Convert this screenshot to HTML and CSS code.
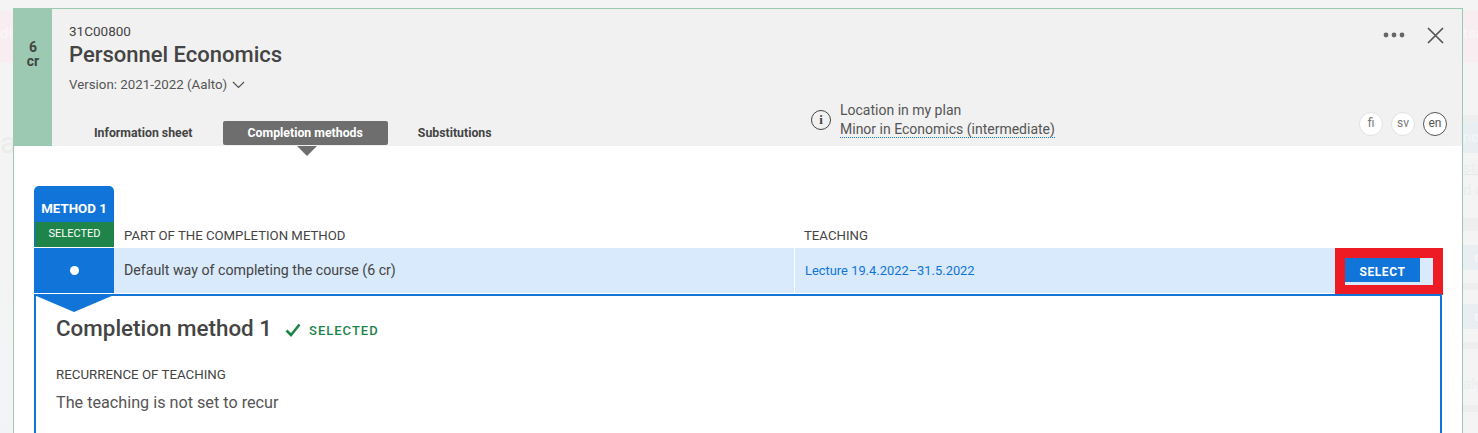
FILE: index.html
```html
<!DOCTYPE html>
<html lang="en">
<head>
  <meta charset="UTF-8" />
  <title>Personnel Economics</title>
  <link rel="stylesheet" href="styles.css">
</head>
<body>
  <div class="backdrop">
    <div class="bg-strip left">
      <div class="bg-pink">di</div>
      <div class="bg-letter">a</div>
    </div>
    <div class="modal">
      <div class="modal-head">
        <div class="credits"><span>6</span><span>cr</span></div>
        <div class="head-main">
          <div class="head-top">
            <div class="titles">
              <div class="code">31C00800</div>
              <h1>Personnel Economics</h1>
              <div class="version">Version: 2021-2022 (Aalto)
                <svg width="13" height="8" viewBox="0 0 13 8"><path d="M1 1l5.5 5.5L12 1" fill="none" stroke="#555" stroke-width="1.2"/></svg>
              </div>
            </div>
            <div class="head-actions">
              <svg width="22" height="6" viewBox="0 0 22 6"><circle cx="3" cy="3" r="2.4" fill="#666"/><circle cx="11" cy="3" r="2.4" fill="#666"/><circle cx="19" cy="3" r="2.4" fill="#666"/></svg>
              <svg width="17" height="17" viewBox="0 0 17 17"><path d="M1 1l15 15M16 1L1 16" stroke="#555" stroke-width="1.7" fill="none"/></svg>
            </div>
          </div>
          <div class="head-bottom">
            <div class="tabs">
              <a class="tab">Information sheet</a>
              <a class="tab active">Completion methods</a>
              <a class="tab">Substitutions</a>
            </div>
            <div class="location">
              <span class="info-icon">i</span>
              <div class="location-text">
                <div>Location in my plan</div>
                <a>Minor in Economics (intermediate)</a>
              </div>
            </div>
            <div class="langs">
              <span class="lang">fi</span>
              <span class="lang">sv</span>
              <span class="lang current">en</span>
            </div>
          </div>
        </div>
      </div>
      <div class="modal-body">
        <div class="method-table">
          <div class="method-col">
            <div class="method-tab">METHOD 1</div>
            <div class="method-selected">SELECTED</div>
            <div class="method-radio"><span class="dot"></span></div>
          </div>
          <div class="method-rows">
            <div class="col-heads">
              <div class="col-part">PART OF THE COMPLETION METHOD</div>
              <div class="col-teach">TEACHING</div>
            </div>
            <div class="row">
              <div class="col-part">Default way of completing the course (6 cr)</div>
              <div class="col-teach"><a>Lecture 19.4.2022–31.5.2022</a></div>
              <div class="col-btn">
                <div class="select-mark"><button class="select-btn">SELECT</button></div>
              </div>
            </div>
          </div>
        </div>
        <div class="detail">
          <svg class="pointer" width="80" height="17" viewBox="0 0 80 17"><path d="M0 0h80L40 17z" fill="#1174d9"/></svg>
          <div class="detail-title">
            <h2>Completion method 1</h2>
            <svg class="check" width="16" height="14" viewBox="0 0 16 14"><path d="M1.5 7.5l4.5 4.5L14.5 1.5" fill="none" stroke="#1e8449" stroke-width="2.6"/></svg>
            <span class="selected-label">SELECTED</span>
          </div>
          <h3>RECURRENCE OF TEACHING</h3>
          <p>The teaching is not set to recur</p>
        </div>
      </div>
    </div>
    <div class="bg-strip right">
      <div class="bg-pink">tsa</div>
      <div class="bg-band first"></div>
      <div class="bg-blue">no</div>
      <div class="bg-text lined">str</div>
      <div class="bg-text">d c</div>
      <div class="bg-band gap-a"></div>
      <div class="bg-blue short">d</div>
      <div class="bg-band gap-b"></div>
      <div class="bg-blue short">d</div>
      <div class="bg-band gap-b"></div>
      <div class="bg-text tall">ald</div>
      <div class="bg-band gap-c"></div>
    </div>
  </div>
</body>
</html>
```

FILE: styles.css
```css
html, body {
  margin: 0;
  height: 100%;
  overflow: hidden;
}
body {
  font-family: Roboto, 'Noto Sans', sans-serif;
  color: #444;
  background: #f4f4f4;
}
.backdrop {
  display: flex;
  height: 433px;
  overflow: hidden;
}
.bg-strip {
  width: 13px;
  flex: none;
  padding-top: 11px;
  overflow: hidden;
  white-space: nowrap;
}
.bg-strip.left {
  background: linear-gradient(#f4f4f4 60%, #f1f3f5);
}
.bg-strip.right {
  width: 15px;
}
.bg-pink {
  height: 52px;
  background: #f8eef1;
  color: #fbf7f8;
  font-size: 15px;
  line-height: 44px;
}
.bg-letter {
  color: #ececec;
  font-size: 30px;
  line-height: 40px;
  margin-top: 60px;
}
.bg-band {
  height: 7px;
  background: #eeeeee;
}
.bg-band.first {
  margin-top: 52px;
}
.bg-band.gap-a {
  height: 13px;
  margin-top: 13px;
  margin-bottom: 14px;
}
.bg-band.gap-b {
  margin: 13px 0 14px;
}
.bg-band.gap-c {
  margin-top: 0;
}
.bg-blue {
  height: 31px;
  background: #e9eef2;
  color: #f4f6f8;
  font-size: 15px;
  line-height: 31px;
}
.bg-blue.short {
  height: 25px;
  line-height: 25px;
  text-indent: 11px;
  font-weight: 700;
}
.bg-text {
  height: 30px;
  line-height: 30px;
  font-size: 15px;
  color: #ecedef;
}
.bg-text.lined {
  height: 21px;
  border-bottom: 1px solid #e8e8e8;
}
.bg-text.tall {
  height: 42px;
  line-height: 42px;
}
.modal {
  flex: 1;
  min-width: 0;
  margin-top: 8px;
  background: #fff;
  border: 1px solid #9cc9b1;
  border-bottom: none;
}
.modal-head {
  display: flex;
  height: 137px;
  background: #f1f1f1;
}
.credits {
  width: 38px;
  flex: none;
  background: #9cc9b1;
  display: flex;
  flex-direction: column;
  align-items: center;
  padding-top: 31px;
  box-sizing: border-box;
  font-size: 14px;
  font-weight: 700;
  line-height: 14px;
}
.head-main {
  flex: 1;
  display: flex;
  flex-direction: column;
  justify-content: space-between;
  padding-left: 17px;
}
.head-top {
  display: flex;
  justify-content: space-between;
}
.code {
  font-size: 13.5px;
  margin-top: 14px;
  line-height: 17px;
}
h1 {
  margin: 0;
  font-size: 22px;
  line-height: 30px;
  font-weight: 500;
}
.version {
  margin-top: 6px;
  font-size: 13.3px;
  line-height: 18px;
  color: #555;
}
.version svg {
  margin-left: 2px;
}
.head-actions {
  display: flex;
  align-items: center;
  gap: 22px;
  height: 20px;
  margin: 16px 18px 0 0;
}
.head-bottom {
  display: flex;
  align-items: flex-end;
}
.tabs {
  display: flex;
  align-items: center;
  gap: 5px;
  margin-bottom: 1px;
  width: 742px;
}
.tab {
  font-size: 12.3px;
  font-weight: 700;
  line-height: 24px;
  color: #444;
  padding: 0 25px;
  position: relative;
}
.tab.active {
  background: #6e6e6e;
  color: #fff;
  border-radius: 2px;
}
.tab.active::after {
  content: "";
  position: absolute;
  left: 50%;
  top: 100%;
  margin: 1px 0 0 -8px;
  border: 10px solid transparent;
  border-top-color: #6e6e6e;
  border-bottom: none;
}
.location {
  display: flex;
  align-items: center;
  gap: 9px;
  flex: 1;
  font-size: 14px;
  line-height: 19px;
  color: #555;
  margin-bottom: 7px;
}
.info-icon {
  width: 20px;
  height: 20px;
  box-sizing: border-box;
  border: 1.5px solid #444;
  border-radius: 50%;
  text-align: center;
  font: 700 13px/17px 'Liberation Serif', serif;
  color: #444;
}
.location-text a {
  border-bottom: 1px dotted #1174d9;
}
.langs {
  display: flex;
  gap: 8px;
  margin: 0 15px 10px 0;
}
.lang {
  width: 24px;
  height: 24px;
  box-sizing: border-box;
  background: #fff;
  border: 1px solid #e2e2e2;
  border-radius: 50%;
  font-size: 12px;
  line-height: 21px;
  text-align: center;
  color: #777;
}
.lang.current {
  border-color: #555;
  color: #555;
}
.modal-body {
  padding: 40px 20px 0;
}
.method-table {
  display: flex;
}
.method-col {
  width: 80px;
  flex: none;
}
.method-tab {
  height: 36px;
  background: #1174d9;
  border-radius: 5px 5px 0 0;
  color: #fff;
  font-size: 13.3px;
  font-weight: 700;
  line-height: 46px;
  text-align: center;
}
.method-selected {
  height: 25px;
  background: #1e8449;
  border-left: 1px solid #1174d9;
  color: #fff;
  font-size: 11px;
  line-height: 24px;
  text-align: center;
}
.method-radio {
  height: 45px;
  margin-top: 1px;
  background: #1174d9;
  display: flex;
  align-items: center;
  justify-content: center;
}
.dot {
  width: 9px;
  height: 9px;
  border-radius: 50%;
  background: #fff;
}
.method-rows {
  flex: 1;
  padding-top: 36px;
}
.col-heads {
  display: flex;
  height: 26px;
  font-size: 13.2px;
  line-height: 27px;
}
.col-part {
  width: 670px;
  padding-left: 10px;
  flex: none;
}
.col-teach {
  width: 530px;
  padding-left: 10px;
  flex: none;
  box-sizing: border-box;
}
.row {
  display: flex;
  height: 45px;
  background: #d8eafb;
  font-size: 14.2px;
  line-height: 44px;
}
.row .col-teach {
  border-left: 1px solid #fff;
  width: 541px;
}
.row a {
  color: #1174d9;
  font-size: 12.9px;
}
.col-btn {
  flex: 1;
  position: relative;
}
.select-mark {
  position: absolute;
  left: 0;
  top: 0;
  width: 108px;
  height: 47px;
  box-sizing: border-box;
  border: 10px solid #ed1c24;
  background: #d8eafb;
}
.select-btn {
  display: block;
  width: 75px;
  height: 24px;
  border: none;
  padding: 4px 0 0;
  background: #1174d9;
  color: #fff;
  font: 700 12px/20px Roboto, sans-serif;
  letter-spacing: 0.6px;
}
.detail {
  position: relative;
  border: 2px solid #1174d9;
  border-bottom: none;
  padding: 17px 20px 0;
  margin-top: 1px;
  height: 180px;
  box-sizing: border-box;
}
.pointer {
  position: absolute;
  left: -2px;
  top: -1px;
}
.detail-title {
  display: flex;
  align-items: center;
  gap: 8px;
}
h2 {
  margin: 0 5px 0 0;
  font-size: 22.4px;
  line-height: 30px;
  font-weight: 500;
}
.check {
  margin-top: 4px;
}
.selected-label {
  margin-top: 4px;
  color: #1e8449;
  font-size: 13px;
  font-weight: 500;
  letter-spacing: 1px;
}
h3 {
  margin: 24px 0 0;
  font-size: 13.3px;
  line-height: 16px;
  font-weight: 400;
}
.detail p {
  margin: 10px 0 0;
  font-size: 16.2px;
  line-height: 20px;
  color: #555;
}
```
